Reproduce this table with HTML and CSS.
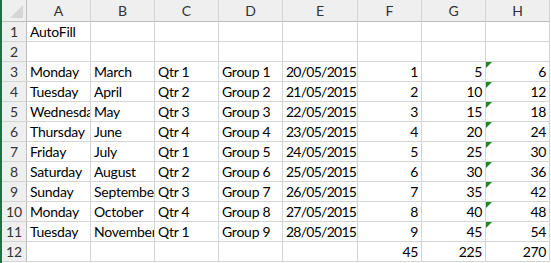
FILE: index.html
```html
<!DOCTYPE html>
<html>
<head>
<meta charset="utf-8">
<link rel="stylesheet" href="styles.css">
</head>
<body>
<div class="sheet">
  <div class="corner"><span class="corner-tri"></span></div>
  <div class="colh">A</div><div class="colh">B</div><div class="colh">C</div><div class="colh">D</div><div class="colh">E</div><div class="colh">F</div><div class="colh">G</div><div class="colh">H</div>

  <div class="rowh">1</div><div class="c">AutoFill</div><div class="c"></div><div class="c"></div><div class="c"></div><div class="c"></div><div class="c"></div><div class="c"></div><div class="c"></div>
  <div class="rowh">2</div><div class="c"></div><div class="c"></div><div class="c"></div><div class="c"></div><div class="c"></div><div class="c"></div><div class="c"></div><div class="c"></div>

  <div class="rowh">3</div><div class="c">Monday</div><div class="c">March</div><div class="c">Qtr 1</div><div class="c">Group 1</div><div class="c d">20/05/2015</div><div class="c n">1</div><div class="c n">5</div><div class="c n flag">6</div>
  <div class="rowh">4</div><div class="c">Tuesday</div><div class="c">April</div><div class="c">Qtr 2</div><div class="c">Group 2</div><div class="c d">21/05/2015</div><div class="c n">2</div><div class="c n">10</div><div class="c n flag">12</div>
  <div class="rowh">5</div><div class="c">Wednesday</div><div class="c">May</div><div class="c">Qtr 3</div><div class="c">Group 3</div><div class="c d">22/05/2015</div><div class="c n">3</div><div class="c n">15</div><div class="c n flag">18</div>
  <div class="rowh">6</div><div class="c">Thursday</div><div class="c">June</div><div class="c">Qtr 4</div><div class="c">Group 4</div><div class="c d">23/05/2015</div><div class="c n">4</div><div class="c n">20</div><div class="c n flag">24</div>
  <div class="rowh">7</div><div class="c">Friday</div><div class="c">July</div><div class="c">Qtr 1</div><div class="c">Group 5</div><div class="c d">24/05/2015</div><div class="c n">5</div><div class="c n">25</div><div class="c n flag">30</div>
  <div class="rowh">8</div><div class="c">Saturday</div><div class="c">August</div><div class="c">Qtr 2</div><div class="c">Group 6</div><div class="c d">25/05/2015</div><div class="c n">6</div><div class="c n">30</div><div class="c n flag">36</div>
  <div class="rowh">9</div><div class="c">Sunday</div><div class="c">September</div><div class="c">Qtr 3</div><div class="c">Group 7</div><div class="c d">26/05/2015</div><div class="c n">7</div><div class="c n">35</div><div class="c n flag">42</div>
  <div class="rowh">10</div><div class="c">Monday</div><div class="c">October</div><div class="c">Qtr 4</div><div class="c">Group 8</div><div class="c d">27/05/2015</div><div class="c n">8</div><div class="c n">40</div><div class="c n flag">48</div>
  <div class="rowh">11</div><div class="c">Tuesday</div><div class="c">November</div><div class="c">Qtr 1</div><div class="c">Group 9</div><div class="c d">28/05/2015</div><div class="c n">9</div><div class="c n">45</div><div class="c n flag">54</div>
  <div class="rowh">12</div><div class="c"></div><div class="c"></div><div class="c"></div><div class="c"></div><div class="c"></div><div class="c n">45</div><div class="c n">225</div><div class="c n">270</div>
</div>
</body>
</html>
```

FILE: styles.css
```css
html, body {
  margin: 0;
  padding: 0;
  background: #ffffff;
}
body {
  font-family: Lato, "Liberation Sans", sans-serif;
  font-size: 14px;
  color: #000000;
}
.sheet {
  display: grid;
  grid-template-columns: 25px 64px 64px 64px 64px 75px 64px 64px 64px;
  grid-template-rows: 22px repeat(12, 20px);
  border-left: 2px solid #1e7145;
  width: 547px;
  height: 263px;
  align-content: start;
}
.sheet > div {
  box-sizing: border-box;
  border-right: 1px solid #d4d4d4;
  border-bottom: 1px solid #d4d4d4;
  white-space: nowrap;
  overflow: hidden;
  line-height: 20px;
}
.corner {
  position: relative;
  background: #efefef;
  border-right-color: #bdbdbd !important;
  border-bottom-color: #bdbdbd !important;
}
.corner-tri {
  position: absolute;
  right: 3px;
  bottom: 3px;
  width: 13px;
  height: 13px;
  background: #d6d6d6;
  clip-path: polygon(100% 0, 100% 100%, 0 100%);
}
.colh {
  background: #efefef;
  text-align: center;
  color: #333333;
  border-bottom-color: #bdbdbd !important;
  line-height: 22px !important;
}
.rowh {
  background: #efefef;
  text-align: center;
  color: #333333;
  border-right-color: #bdbdbd !important;
}
.c {
  padding: 0 3px 0 3px;
  letter-spacing: -0.25px;
}
.d {
  letter-spacing: -0.75px;
}
.n {
  text-align: right;
  letter-spacing: -0.4px;
}
.flag {
  position: relative;
}
.flag::before {
  content: "";
  position: absolute;
  left: 0;
  top: 0;
  width: 6px;
  height: 6px;
  background: #1a8a1a;
  clip-path: polygon(0 0, 100% 0, 0 100%);
}
```
